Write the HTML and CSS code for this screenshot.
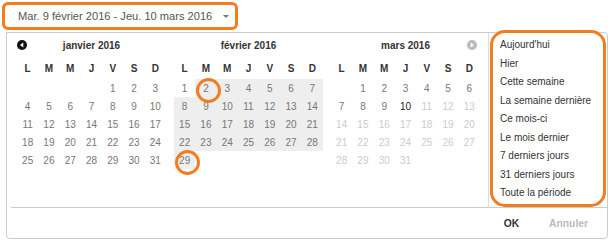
FILE: index.html
```html
<!DOCTYPE html>
<html lang="fr">
<head>
<meta charset="utf-8">
<link rel="stylesheet" href="styles.css">
</head>
<body>
<div class="picker">
  <button class="range">Mar. 9 février 2016 - Jeu. 10 mars 2016<span class="caret"></span></button>
  <div class="panel">
    <div class="main">
      <div class="cals">
        <div class="cal">
          <div class="head">
            <svg class="nav prev" width="10" height="10" viewBox="0 0 10 10"><circle cx="5" cy="5" r="5" fill="#111"/><polygon points="3,5 6.3,2.6 6.3,7.4" fill="#fff"/></svg>
            <span class="title">janvier 2016</span>
            <span></span>
          </div>
          <div class="names"><span>L</span><span>M</span><span>M</span><span>J</span><span>V</span><span>S</span><span>D</span></div>
          <div class="grid">
            <span class="d"></span><span class="d"></span><span class="d"></span><span class="d"></span><span class="d">1</span><span class="d">2</span><span class="d">3</span>
            <span class="d">4</span><span class="d">5</span><span class="d">6</span><span class="d">7</span><span class="d">8</span><span class="d">9</span><span class="d">10</span>
            <span class="d">11</span><span class="d">12</span><span class="d">13</span><span class="d">14</span><span class="d">15</span><span class="d">16</span><span class="d">17</span>
            <span class="d">18</span><span class="d">19</span><span class="d">20</span><span class="d">21</span><span class="d">22</span><span class="d">23</span><span class="d">24</span>
            <span class="d">25</span><span class="d">26</span><span class="d">27</span><span class="d">28</span><span class="d">29</span><span class="d">30</span><span class="d">31</span>
          </div>
        </div>
        <div class="cal">
          <div class="head">
            <span></span>
            <span class="title">février 2016</span>
            <span></span>
          </div>
          <div class="names"><span>L</span><span>M</span><span>M</span><span>J</span><span>V</span><span>S</span><span>D</span></div>
          <div class="grid">
            <span class="d">1</span><span class="d in ring">2</span><span class="d in">3</span><span class="d in">4</span><span class="d in">5</span><span class="d in">6</span><span class="d in">7</span>
            <span class="d in">8</span><span class="d in">9</span><span class="d in">10</span><span class="d in">11</span><span class="d in">12</span><span class="d in">13</span><span class="d in">14</span>
            <span class="d in">15</span><span class="d in">16</span><span class="d in">17</span><span class="d in">18</span><span class="d in">19</span><span class="d in">20</span><span class="d in">21</span>
            <span class="d in">22</span><span class="d in">23</span><span class="d in">24</span><span class="d in">25</span><span class="d in">26</span><span class="d in">27</span><span class="d in">28</span>
            <span class="d in ring">29</span>
          </div>
        </div>
        <div class="cal">
          <div class="head">
            <span></span>
            <span class="title">mars 2016</span>
            <svg class="nav next" width="10" height="10" viewBox="0 0 10 10"><circle cx="5" cy="5" r="5" fill="#bbb"/><polygon points="7,5 3.7,2.6 3.7,7.4" fill="#fff"/></svg>
          </div>
          <div class="names"><span>L</span><span>M</span><span>M</span><span>J</span><span>V</span><span>S</span><span>D</span></div>
          <div class="grid">
            <span class="d"></span><span class="d">1</span><span class="d">2</span><span class="d">3</span><span class="d">4</span><span class="d">5</span><span class="d">6</span>
            <span class="d">7</span><span class="d">8</span><span class="d">9</span><span class="d today">10</span><span class="d off">11</span><span class="d off">12</span><span class="d off">13</span>
            <span class="d off">14</span><span class="d off">15</span><span class="d off">16</span><span class="d off">17</span><span class="d off">18</span><span class="d off">19</span><span class="d off">20</span>
            <span class="d off">21</span><span class="d off">22</span><span class="d off">23</span><span class="d off">24</span><span class="d off">25</span><span class="d off">26</span><span class="d off">27</span>
            <span class="d off">28</span><span class="d off">29</span><span class="d off">30</span><span class="d off">31</span>
          </div>
        </div>
      </div>
      <ul class="presets">
        <li>Aujourd'hui</li>
        <li>Hier</li>
        <li>Cette semaine</li>
        <li>La semaine dernière</li>
        <li>Ce mois-ci</li>
        <li>Le mois dernier</li>
        <li>7 derniers jours</li>
        <li>31 derniers jours</li>
        <li>Toute la période</li>
      </ul>
    </div>
    <div class="footer">
      <span class="ok">OK</span>
      <span class="cancel">Annuler</span>
    </div>
  </div>
</div>
</body>
</html>
```
FILE: styles.css
```css
* { box-sizing: border-box; }
html, body { margin: 0; padding: 0; background: #fff; }
body { font-family: "Liberation Sans", Arial, sans-serif; color: #555; }

.picker { padding: 2px 0 0 2px; }

.range {
  display: flex;
  align-items: center;
  width: 236px;
  height: 28px;
  margin: 0;
  padding: 0 0 0 13px;
  border: 3px solid #f07d20;
  border-radius: 6px;
  background: #fff;
  font-family: "Liberation Sans", Arial, sans-serif;
  font-size: 11.1px;
  color: #555;
  text-align: left;
}
.caret {
  margin-left: 11px;
  width: 0; height: 0;
  border-left: 3px solid transparent;
  border-right: 3px solid transparent;
  border-top: 3px solid #777;
}

.panel {
  margin: 2px 0 0 4px;
  width: 602px;
  height: 207px;
  border: 1px solid #ccc;
  border-radius: 0 4px 4px 4px;
  display: flex;
  flex-direction: column;
}

.main { display: flex; height: 174px; }

.cals {
  flex: 1;
  display: flex;
  gap: 8px;
  padding-left: 10px;
}

.cal { width: 149px; padding-top: 3px; }

.head {
  display: grid;
  grid-template-columns: 21px 1fr 21px;
  align-items: center;
  height: 18px;
}
.title {
  text-align: center;
  font-weight: bold;
  font-size: 10px;
  color: #333;
}
.nav { display: block; }
.next { justify-self: end; margin-right: 3px; }

.names, .grid {
  display: grid;
  grid-template-columns: repeat(7, 1fr);
  grid-auto-rows: 18px;
  font-size: 10px;
}
.names { margin-top: 5px; }
.grid { margin-top: 2px; }
.names span {
  display: flex; align-items: center; justify-content: center;
  font-weight: bold;
  color: #333;
}
.d {
  display: flex; align-items: center; justify-content: center;
  color: #777;
  position: relative;
}
.d.in { background: #eeeeee; }
.d.off { color: #ccc; }
.d.today { color: #222; }

.ring { z-index: 1; }
.ring::after {
  content: "";
  position: absolute;
  left: 50%; top: 50%;
  width: 19px; height: 19px;
  margin: -10px 0 0 -10px;
  border: 3px solid #f07d20;
  border-radius: 50%;
}

.presets {
  position: relative;
  width: 119px;
  margin: 0;
  padding: 3px 0 0 11px;
  list-style: none;
  border-left: 1px solid #ddd;
  font-size: 10px;
  line-height: 18.5px;
  color: #333;
}
.presets::after {
  content: "";
  position: absolute;
  left: 1px; right: 1px; top: -3px; bottom: 0;
  border: 3px solid #f07d20;
  border-radius: 15px;
}

.footer {
  flex: 1;
  margin-left: 4px;
  border-top: 1px solid #ccc;
  display: flex;
  align-items: center;
  justify-content: flex-end;
  gap: 30px;
  padding-right: 19px;
  font-size: 10.3px;
  font-weight: bold;
}
.ok { color: #333; }
.cancel { color: #bbb; }
```
